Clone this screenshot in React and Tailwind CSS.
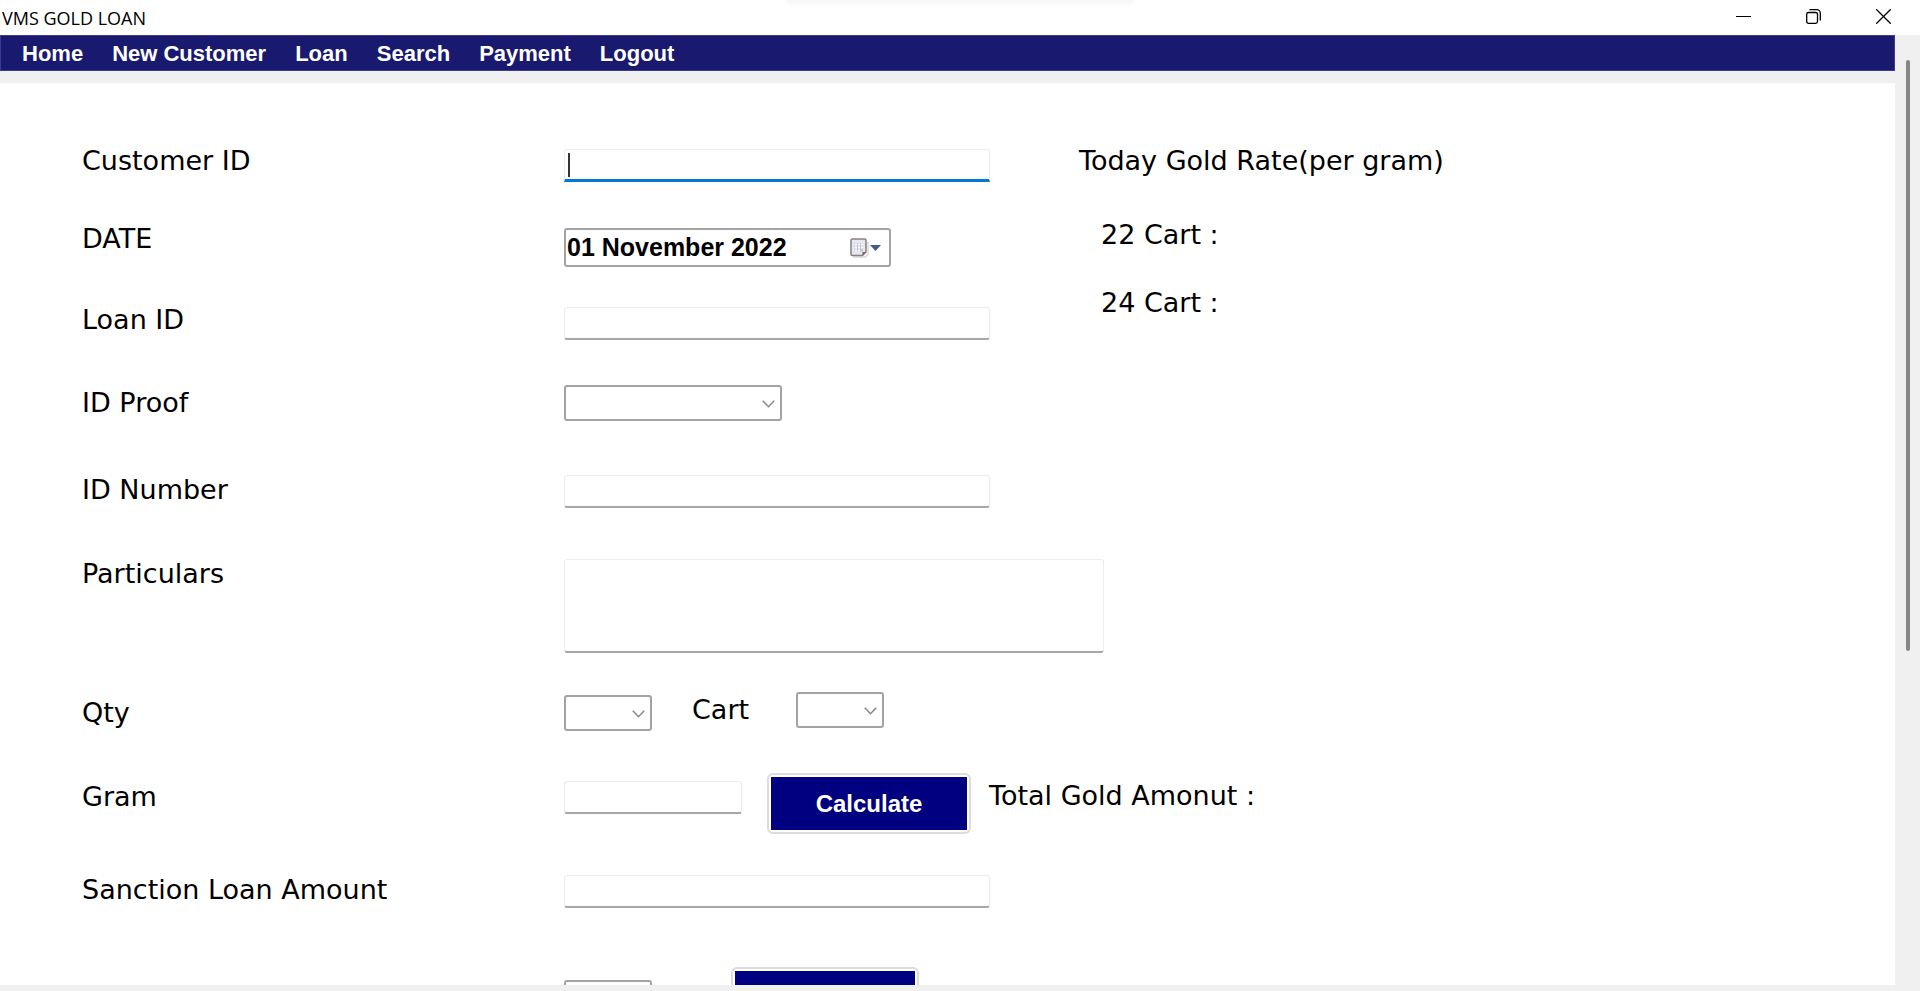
import React from "react";

const NAV = ["Home", "New Customer", "Loan", "Search", "Payment", "Logout"];

const labelClass = "text-[27px] leading-8 whitespace-nowrap";
const boxClass =
  "block rounded-[3px] border border-[#ececec] border-b-2 border-b-[#a6a6a6] bg-white px-1 text-xl outline-none";

function Label({ htmlFor, children, className = "" }) {
  return (
    <label htmlFor={htmlFor} className={`${labelClass} ${className}`}>
      {children}
    </label>
  );
}

function TextBox({ id, className = "w-[426px]" }) {
  return <input id={id} type="text" className={`${boxClass} h-[33px] ${className}`} />;
}

function Dropdown({ id, label, options, className = "w-[88px]" }) {
  return (
    <div className={`relative h-9 ${className}`}>
      <select
        id={id}
        aria-label={label}
        defaultValue=""
        className="block h-full w-full appearance-none rounded-[3px] border-2 border-[#a3a3a3] bg-white px-2 text-xl outline-none"
      >
        <option value=""></option>
        {options.map((option) => (
          <option key={option}>{option}</option>
        ))}
      </select>
      <svg
        className="pointer-events-none absolute top-[15px] right-[7px] h-2 w-[13px]"
        viewBox="0 0 13 8"
        fill="none"
        stroke="#8a8a8a"
        strokeWidth="1.6"
      >
        <path d="M0.800 0.800l5.700 5.900 5.700-5.900" />
      </svg>
    </div>
  );
}

function NavyButton({ children, label, className }) {
  return (
    <button
      type="button"
      aria-label={label}
      className={`rounded-md border-2 border-[#dcdcdc] bg-white p-[2px] ${className}`}
    >
      <span className="flex h-full items-center justify-center bg-[#000080] font-['Liberation_Sans',Arial,sans-serif] text-2xl font-bold text-white">
        {children}
      </span>
    </button>
  );
}

function TitleBar() {
  return (
    <header className="relative flex h-[35px] shrink-0 items-start justify-between bg-white">
      <div className="absolute top-0 left-[41%] h-2 w-[18%] bg-linear-to-b from-[#f6f6f6] to-white" />
      <h1 className="pt-1 pl-[2px] font-['Open_Sans',sans-serif] text-lg">VMS GOLD LOAN</h1>
      <div className="flex pr-[2px]">
        <button type="button" aria-label="Minimize" className="flex h-[33px] w-[70px] items-center justify-center">
          <svg width="15" height="15" viewBox="0 0 15 15" stroke="#000" shapeRendering="crispEdges">
            <path d="M0 7.500h15" />
          </svg>
        </button>
        <button type="button" aria-label="Restore" className="flex h-[33px] w-[70px] items-center justify-center">
          <svg width="15" height="15" viewBox="0 0 15 15" fill="none" stroke="#000" strokeWidth="1.3">
            <rect x="0.700" y="3.500" width="10.800" height="10.800" rx="1.800" />
            <path d="M3.500 0.700h7.300a3.500 3.500 0 0 1 3.500 3.500v7.300" />
          </svg>
        </button>
        <button type="button" aria-label="Close" className="flex h-[33px] w-[70px] items-center justify-center">
          <svg width="15" height="15" viewBox="0 0 15 15" stroke="#000" strokeWidth="1.3">
            <path d="M0.300 0.300l14.400 14.400M14.700 0.300l-14.400 14.400" />
          </svg>
        </button>
      </div>
    </header>
  );
}

function DateField() {
  return (
    <div className="relative h-[39px] w-[327px]">
      <input
        id="date"
        type="text"
        defaultValue="01 November 2022"
        className="block h-full w-full rounded-[3px] border-2 border-[#a3a3a3] bg-white pl-px font-['Liberation_Sans',Arial,sans-serif] text-[25px] font-bold outline-none"
      />
      <button type="button" aria-label="Open calendar" className="absolute top-[10px] right-[9px]">
        <svg width="32" height="20" viewBox="0 0 32 20">
          <path d="M3 19h12.500l2.500-3V4" fill="none" stroke="#dcd8d8" strokeWidth="1.500" />
          <path d="M2.500 1h12a1.500 1.500 0 0 1 1.500 1.500v11.500l-3.500 3.500H2.500a1.500 1.500 0 0 1-1.500-1.500V2.500A1.500 1.500 0 0 1 2.500 1z" fill="#e6e8ee" stroke="#8b7d7d" strokeWidth="1.500" />
          <path d="M4.500 5h8.500v8.500H4.500z" fill="#c3c9da" />
          <path d="M5 5.500h2v2H5zM8 5.500h2v2H8zM11 5.500h2v2h-2zM5 8.500h2v2H5zM8 8.500h2v2H8zM11 8.500h2v2h-2zM5 11.500h2v2H5zM8 11.500h2v2H8z" fill="#fff" />
          <path d="M12.500 17.500V14H16z" fill="#6d6468" />
          <path d="M20 7h11l-5.500 6z" fill="#455a8c" />
        </svg>
      </button>
    </div>
  );
}

function LoanForm() {
  return (
    <form className="grid grid-cols-[482px_515px_1fr] grid-rows-[78px_81px_81px_89px_84px_134px_81px_101px_93px_60px] items-start pt-[62px] pl-[82px]">
      <Label htmlFor="customer">Customer ID</Label>
      <div className="relative mt-1">
        <input
          id="customer"
          type="text"
          className="block h-[33px] w-[426px] rounded-t-[3px] border border-[#e8eef2] border-b-[3px] border-b-[#0078d4] bg-white px-1 text-xl outline-none"
        />
        <span className="absolute top-1 left-1 h-6 w-[2px] bg-[#333]" />
      </div>

      <section className="col-start-3 row-span-3 row-start-1">
        <h2 className={labelClass}>Today Gold Rate(per gram)</h2>
        <p className={`${labelClass} mt-[42px] pl-[22px]`}>22 Cart :</p>
        <p className={`${labelClass} mt-9 pl-[22px]`}>24 Cart :</p>
      </section>

      <Label htmlFor="date">DATE</Label>
      <div className="mt-[5px]">
        <DateField />
      </div>

      <Label htmlFor="loan">Loan ID</Label>
      <div className="mt-[3px]">
        <TextBox id="loan" />
      </div>

      <Label htmlFor="proof" className="mt-[2px]">ID Proof</Label>
      <div className="col-span-2">
        <Dropdown id="proof" options={["Aadhaar", "PAN", "Voter ID"]} className="w-[218px]" />
      </div>

      <Label htmlFor="number">ID Number</Label>
      <div className="col-span-2 mt-px">
        <TextBox id="number" />
      </div>

      <Label htmlFor="particulars">Particulars</Label>
      <textarea
        id="particulars"
        className={`${boxClass} col-span-2 mt-px h-[94px] w-[540px] resize-none`}
      />

      <Label htmlFor="qty" className="mt-[5px]">Qty</Label>
      <div className="col-span-2 flex items-start">
        <div className="mt-[3px]">
          <Dropdown id="qty" options={["1", "2", "3", "4", "5"]} />
        </div>
        <Label htmlFor="cart" className="mt-[2px] w-[144px] pl-10">Cart</Label>
        <Dropdown id="cart" options={["22", "24"]} />
      </div>

      <Label htmlFor="gram" className="mt-2">Gram</Label>
      <div className="col-span-2 flex items-start">
        <div className="mt-2 mr-[25px]">
          <TextBox id="gram" className="w-[178px]" />
        </div>
        <NavyButton className="h-[61px] w-[204px]">Calculate</NavyButton>
        <p className={`${labelClass} mt-[7px] ml-[18px]`}>Total Gold Amonut :</p>
      </div>

      <Label htmlFor="sanction">Sanction Loan Amount</Label>
      <div className="col-span-2 mt-px">
        <TextBox id="sanction" />
      </div>

      <div className="col-span-2 col-start-2 flex items-start">
        <div className="mt-[13px] mr-[79px]">
          <Dropdown id="months" label="Months" options={["6", "12"]} />
        </div>
        <NavyButton label="Submit" className="h-[61px] w-[188px]" />
      </div>
    </form>
  );
}

export default function App() {
  return (
    <div className="flex h-screen flex-col overflow-hidden bg-[#f0f0f0] font-['DejaVu_Sans',Verdana,sans-serif] text-black">
      <TitleBar />
      <div className="flex min-h-0 flex-1">
        <div className="flex min-w-0 flex-1 flex-col">
          <nav className="flex h-9 shrink-0 items-center gap-[29px] border border-[#3b3b8c] bg-[#191970] pl-[21px] font-['Liberation_Sans',Arial,sans-serif] text-[22px] font-bold text-white">
            {NAV.map((item) => (
              <a key={item} href="#">
                {item}
              </a>
            ))}
          </nav>
          <main className="mt-3 mb-[6px] min-h-0 flex-1 overflow-hidden bg-white">
            <LoanForm />
          </main>
        </div>
        <aside className="w-[25px] shrink-0 pt-[25px] pl-[11px]">
          <div className="h-[63.5%] w-1 rounded-full bg-[#868686]" />
        </aside>
      </div>
    </div>
  );
}
